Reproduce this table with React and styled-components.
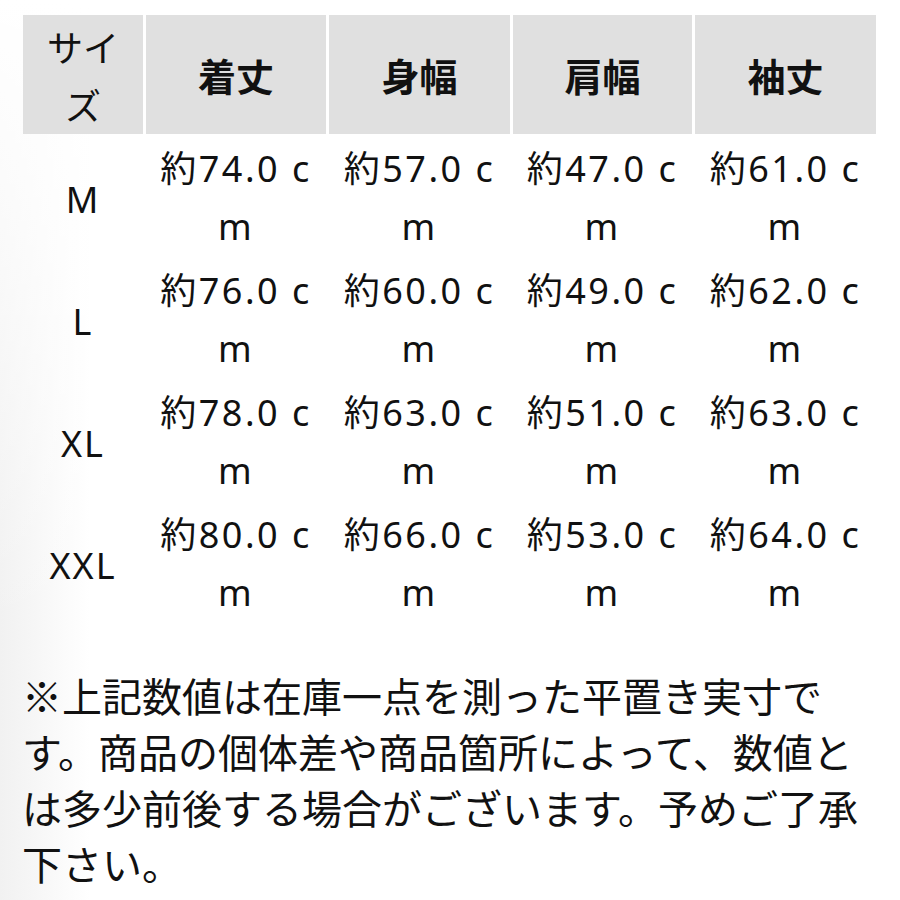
import React from 'react';
import styled, { createGlobalStyle } from 'styled-components';

const GlobalStyle = createGlobalStyle`
  html, body {
    margin: 0;
    padding: 0;
    background: #ffffff;
  }
  body {
    font-family: 'Noto Sans', 'Noto Sans CJK JP', sans-serif;
    color: #111111;
  }
`;

const sizes = [
  { size: 'M', values: ['74.0', '57.0', '47.0', '61.0'] },
  { size: 'L', values: ['76.0', '60.0', '49.0', '62.0'] },
  { size: 'XL', values: ['78.0', '63.0', '51.0', '63.0'] },
  { size: 'XXL', values: ['80.0', '66.0', '53.0', '64.0'] },
];

const headers = ['着丈', '身幅', '肩幅', '袖丈'];
const colWidths = [120, 180, 181, 179, 181];

export default function App() {
  return (
    <Page>
      <GlobalStyle />
      <SizeTable>
        <colgroup>
          {colWidths.map((w, i) => (
            <Col key={i} $w={w} />
          ))}
        </colgroup>
        <thead>
          <tr>
            <HeadCell $light>
              サイ
              <br />ズ
            </HeadCell>
            {headers.map((h) => (
              <HeadCell key={h}>{h}</HeadCell>
            ))}
          </tr>
        </thead>
        <tbody>
          {sizes.map((row) => (
            <tr key={row.size}>
              <SizeCell>{row.size}</SizeCell>
              {row.values.map((v, i) => (
                <ValueCell key={i}>
                  約{v} c
                  <br />m
                </ValueCell>
              ))}
            </tr>
          ))}
        </tbody>
      </SizeTable>
      <Note>
        ※上記数値は在庫一点を測った平置き実寸で
        <br />
        す。商品の個体差や商品箇所によって、数値と
        <br />
        は多少前後する場合がございます。予めご了承
        <br />
        下さい。
      </Note>
    </Page>
  );
}

const Page = styled.div`
  width: 900px;
  height: 900px;
  overflow: hidden;
  padding: 15px 0 0 20px;
  box-sizing: border-box;
  background:
    linear-gradient(to bottom, #ffffff 0%, rgba(255, 255, 255, 0) 70%),
    linear-gradient(to right, #f1f1f1 0px, #ffffff 90px);
`;

const SizeTable = styled.table`
  border-collapse: separate;
  border-spacing: 3px 0;
  table-layout: fixed;
  width: 859px;
`;

const Col = styled.col`
  width: ${(p) => p.$w}px;
`;

const HeadCell = styled.th`
  background: #e0e0e0;
  height: 119px;
  box-sizing: border-box;
  padding: 0;
  font-family: 'Noto Sans CJK JP', sans-serif;
  font-size: ${(p) => (p.$light ? '36px' : '38px')};
  font-weight: ${(p) => (p.$light ? 400 : 700)};
  line-height: 58px;
  text-align: center;
  vertical-align: middle;
`;

const SizeCell = styled.td`
  height: 122px;
  box-sizing: border-box;
  padding: 10px 0 0;
  font-size: 36px;
  letter-spacing: 2px;
  line-height: 58px;
  text-align: center;
  vertical-align: middle;
`;

const ValueCell = styled.td`
  height: 122px;
  box-sizing: border-box;
  padding: 6px 0 0;
  font-size: 36px;
  letter-spacing: 2.5px;
  line-height: 58px;
  text-align: center;
  vertical-align: top;
  white-space: nowrap;
`;

const Note = styled.p`
  margin: 45px 0 0 2px;
  font-family: 'Noto Sans CJK JP', sans-serif;
  font-size: 40px;
  line-height: 56px;
  white-space: nowrap;
`;
